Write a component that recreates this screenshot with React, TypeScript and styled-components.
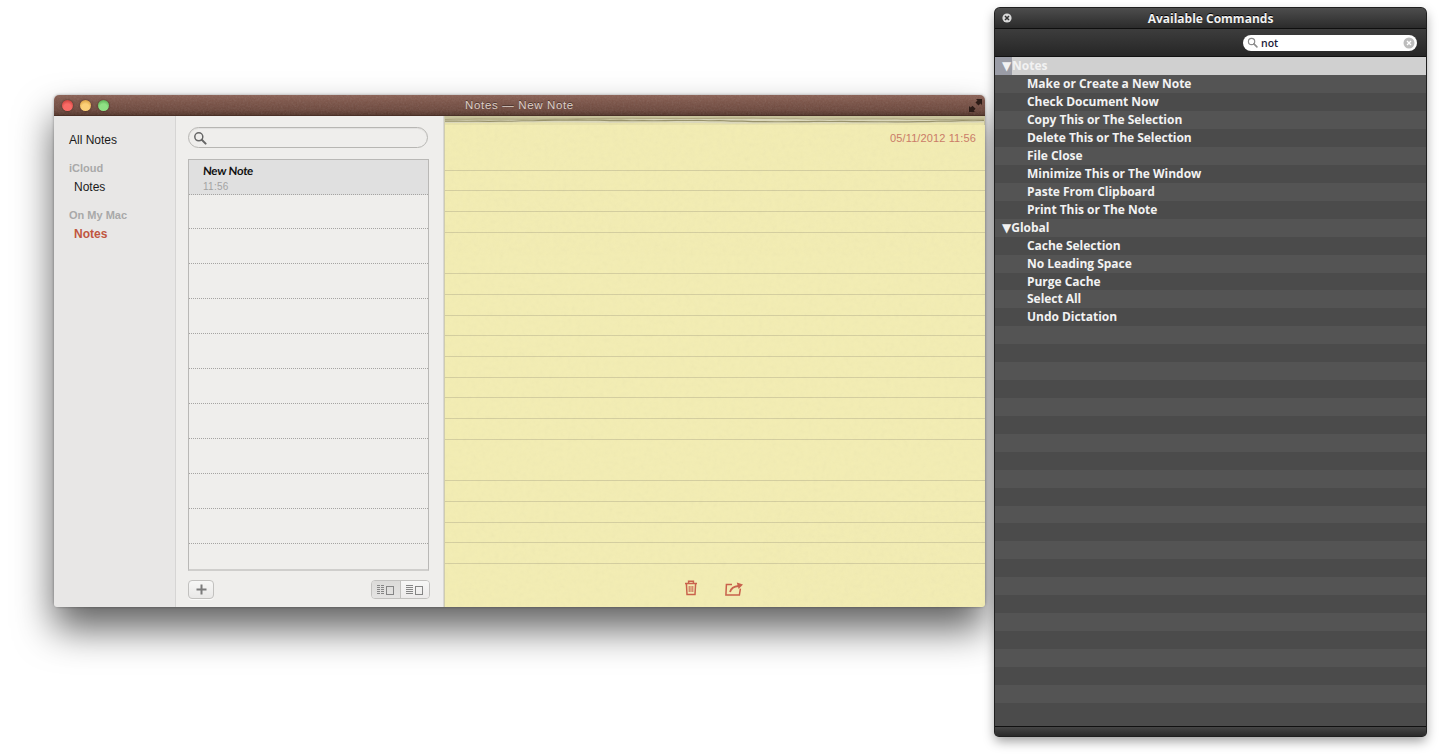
import styled, { createGlobalStyle } from 'styled-components'

const GlobalStyle = createGlobalStyle`
  html, body {
    margin: 0;
    height: 100%;
    background: #fff;
    overflow: hidden;
  }
`

const Desktop = styled.div`
  position: relative;
  width: 1440px;
  height: 756px;
  overflow: hidden;
  font-family: 'Liberation Sans', Arial, sans-serif;
`

/* notes window */
const NotesWindow = styled.div`
  position: absolute;
  left: 54px;
  top: 95px;
  width: 931px;
  height: 512px;
  display: flex;
  flex-direction: column;
  border-radius: 5px 5px 3px 3px;
  overflow: hidden;
`
const WindowShadow = styled.div`
  position: absolute;
  left: 54px;
  top: 95px;
  width: 931px;
  height: 512px;
  border-radius: 5px;
  box-shadow: 0 22px 38px rgba(0, 0, 0, 0.62), 0 0 3px rgba(0, 0, 0, 0.35);
`
const Grain = styled.svg<{ $opacity: number }>`
  position: absolute;
  inset: 0;
  width: 100%;
  height: 100%;
  opacity: ${(p) => p.$opacity};
  pointer-events: none;
`
const TitleBar = styled.div`
  position: relative;
  flex: none;
  height: 21px;
  display: flex;
  align-items: center;
  justify-content: center;
  background: linear-gradient(#8a6054 0%, #7a5246 35%, #6c473c 75%, #523429 100%);
  border-bottom: 1px solid #4a3027;
  box-sizing: border-box;
`
const TrafficLights = styled.div`
  position: absolute;
  left: 8px;
  top: 5px;
  display: flex;
  gap: 7px;
`
const Light = styled.span<{ $c: string; $d: string }>`
  width: 11px;
  height: 11px;
  border-radius: 50%;
  background: radial-gradient(circle at 50% 70%, ${(p) => p.$c} 0%, ${(p) => p.$c} 40%, ${(p) => p.$d} 100%);
  box-shadow: 0 0 2px rgba(40, 20, 10, 0.7);
`
const WindowTitle = styled.div`
  position: relative;
  font-size: 11.5px;
  letter-spacing: 0.65px;
  color: #dbcdc6;
  text-shadow: 0 -1px 0 rgba(0, 0, 0, 0.4);
`
const ExpandIcon = styled.svg`
  position: absolute;
  right: 2px;
  top: 3px;
`
const WindowBody = styled.div`
  flex: 1;
  min-height: 0;
  display: flex;
`
const Sidebar = styled.nav`
  flex: none;
  width: 122px;
  box-sizing: border-box;
  padding: 15px 0 0 15px;
  background: #e8e7e6;
  border-right: 1px solid #d6d5d4;
  font-size: 12px;
`
const SideItem = styled.div<{ $indent?: boolean; $active?: boolean }>`
  height: 19px;
  line-height: 19px;
  margin-left: ${(p) => (p.$indent ? '5px' : '0')};
  color: ${(p) => (p.$active ? '#c0563f' : '#1a1a1a')};
  font-weight: ${(p) => (p.$active ? 700 : 400)};
`
const SideGroup = styled.div`
  height: 19px;
  line-height: 19px;
  margin-top: 9px;
  color: #a9a9a9;
  font-weight: 700;
  font-size: 11px;
`
const ListPane = styled.section`
  flex: none;
  width: 268px;
  box-sizing: border-box;
  display: flex;
  flex-direction: column;
  padding: 11px 14px 8px 12px;
  background: #efeeec;
  border-right: 1px solid #d8d7d5;
`
const SearchBox = styled.div`
  flex: none;
  width: 240px;
  height: 21px;
  box-sizing: border-box;
  display: flex;
  align-items: center;
  padding-left: 4px;
  border: 1px solid #b7b6b3;
  border-radius: 11px;
  background: #efeeec;
  box-shadow: inset 0 1px 1px rgba(0, 0, 0, 0.06);
`
const NoteList = styled.div`
  flex: 1;
  min-height: 0;
  margin-top: 11px;
  display: flex;
  flex-direction: column;
  border: 1px solid #b9b8b6;
  border-bottom: 2px solid #cfcecc;
  width: 241px;
  box-sizing: border-box;
`
const NoteRow = styled.div<{ $selected?: boolean; $last?: boolean }>`
  flex: ${(p) => (p.$last ? '1' : 'none')};
  height: ${(p) => (p.$selected ? '34.6px' : '34.9px')};
  box-sizing: border-box;
  padding: 3px 0 0 14px;
  background: ${(p) => (p.$selected ? '#e0e0e0' : 'transparent')};
  border-bottom: ${(p) => (p.$last ? 'none' : '1px dotted #a5a4a2')};
`
const NoteName = styled.div`
  font-family: 'Lato', 'Liberation Sans', sans-serif;
  font-weight: 700;
  font-size: 11.5px;
  line-height: 15px;
  letter-spacing: -0.25px;
  color: #111;
  transform: skewX(-4deg);
  transform-origin: left;
`
const NoteTime = styled.div`
  margin-top: 3px;
  font-size: 10px;
  line-height: 12px;
  letter-spacing: 0.25px;
  color: #a3a3a3;
`
const ListFooter = styled.div`
  flex: none;
  height: 19px;
  margin-top: 9px;
  width: 242px;
  display: flex;
  justify-content: space-between;
`
const FooterButton = styled.button`
  width: 26px;
  height: 19px;
  padding: 0;
  display: flex;
  align-items: center;
  justify-content: center;
  border: 1px solid #c2c1bf;
  border-radius: 4px;
  background: linear-gradient(#f7f7f6, #e9e8e7);
  box-shadow: 0 1px 0 rgba(255, 255, 255, 0.7);
`
const Segmented = styled.div`
  display: flex;
  height: 19px;
  box-sizing: border-box;
  border: 1px solid #c2c1bf;
  border-radius: 4px;
  overflow: hidden;
`
const Segment = styled.div<{ $on?: boolean }>`
  width: 28px;
  display: flex;
  align-items: center;
  justify-content: center;
  background: ${(p) => (p.$on ? 'linear-gradient(#dcdbd9, #e4e3e2)' : 'linear-gradient(#f7f7f6, #eceaea)')};
  & + & {
    border-left: 1px solid #c2c1bf;
  }
`
const Paper = styled.main`
  position: relative;
  flex: 1;
  min-width: 0;
  display: flex;
  flex-direction: column;
  background: #f3edb3;
  border-left: 1px solid #cfccae;
`
const TornEdge = styled.svg`
  flex: none;
  display: block;
  width: 100%;
  height: 9px;
`
const DateRow = styled.div`
  flex: none;
  height: 25px;
  box-sizing: border-box;
  padding: 7px 9px 0 0;
  text-align: right;
  font-size: 11px;
  line-height: 13px;
  letter-spacing: 0.12px;
  color: #cb7a66;
`
const Ruled = styled.div`
  flex: 1;
  min-height: 0;
  background: repeating-linear-gradient(
    to bottom,
    transparent 0,
    transparent 19.7px,
    #d4ce9f 19.7px,
    #d4ce9f 20.7px
  );
`
const PaperFooter = styled.div`
  flex: none;
  height: 37px;
  box-sizing: border-box;
  display: flex;
  align-items: center;
  justify-content: center;
  gap: 27px;
  padding: 0 2px 1px 0;
`

/* commands panel */
const Panel = styled.aside`
  position: absolute;
  left: 995px;
  top: 8px;
  width: 431px;
  height: 728px;
  display: flex;
  flex-direction: column;
  border-radius: 5px 5px 4px 4px;
  overflow: hidden;
  background: #4b4b4b;
  box-shadow: 0 0 0 1px #1f1f1f, 0 5px 12px rgba(0, 0, 0, 0.4);
  font-family: 'Open Sans', 'Liberation Sans', sans-serif;
`
const PanelTitle = styled.div`
  position: relative;
  flex: none;
  height: 21px;
  box-sizing: border-box;
  display: flex;
  align-items: center;
  justify-content: center;
  background: linear-gradient(#4d4d4d, #2b2b2b);
  border-bottom: 1px solid #0f0f0f;
  color: #f1f1f1;
  font-weight: 700;
  font-size: 12px;
  text-shadow: 0 -1px 0 #000;
`
const PanelClose = styled.svg`
  position: absolute;
  left: 7px;
  top: 5px;
`
const PanelToolbar = styled.div`
  flex: none;
  height: 28px;
  box-sizing: border-box;
  display: flex;
  align-items: center;
  justify-content: flex-end;
  padding-right: 9px;
  background: linear-gradient(#3d3d3d, #262626);
  border-bottom: 1px solid #111;
`
const CommandSearch = styled.div`
  width: 174px;
  height: 16px;
  box-sizing: border-box;
  display: flex;
  align-items: center;
  padding: 0 2px 0 4px;
  background: #fff;
  border-radius: 8px;
  font-size: 10.5px;
  font-weight: 600;
  color: #1c1c3a;
`
const SearchText = styled.span`
  flex: 1;
  margin-left: 3px;
`
const Rows = styled.div`
  flex: 1;
  min-height: 0;
  overflow: hidden;
`
const CommandRow = styled.div<{ $odd: boolean; $indent?: boolean }>`
  height: 17.93px;
  line-height: 17.93px;
  box-sizing: border-box;
  padding-left: ${(p) => (p.$indent ? '32px' : '7px')};
  background: ${(p) => (p.$odd ? '#545454' : '#4b4b4b')};
  color: #f2f2f2;
  font-weight: 700;
  font-size: 12px;
  letter-spacing: -0.03px;
  white-space: nowrap;
`
const SelectedHeader = styled.div`
  height: 18.4px;
  display: flex;
  background: #d0d0d0;
  color: #f2f2f2;
  font-weight: 700;
  font-size: 12px;
  line-height: 18px;
`
const SelectedArrow = styled.span`
  flex: none;
  width: 17px;
  box-sizing: border-box;
  padding-left: 7px;
  background: #9a9ca6;
`
const Arrow = styled.span`
  font-family: 'DejaVu Sans', sans-serif;
  font-size: 12px;
  letter-spacing: 0;
`
const PanelBottom = styled.div`
  flex: none;
  height: 10px;
  background: linear-gradient(#464646, #2a2a2a);
  border-top: 1px solid #111;
  box-sizing: border-box;
`

const Magnifier = ({ color, size }: { color: string; size: number }) => (
  <svg width={size} height={size} viewBox="0 0 14 14" fill="none" stroke={color}>
    <circle cx="5.8" cy="5.8" r="4" strokeWidth="1.5" />
    <path d="M8.8 8.8 L12.6 12.6" strokeWidth="2" strokeLinecap="round" />
  </svg>
)

const ColumnsIcon = ({ fine }: { fine?: boolean }) => (
  <svg width="20" height="10" viewBox="0 0 20 10" fill="none" stroke="#858585" strokeWidth="1">
    {[0.5, 2.5, 4.5, 6.5, 8.5].map((y) => (
      <path key={y} d={fine ? `M1 ${y} H4 M5 ${y} H8` : `M1 ${y} H8`} />
    ))}
    <rect x="10.5" y="1.5" width="7" height="8" />
  </svg>
)

// paper texture and leather grain, same filter at two strengths
const GrainLayer = ({ id, freq, opacity }: { id: string; freq: string; opacity: number }) => (
  <Grain $opacity={opacity}>
    <filter id={id}>
      <feTurbulence type="fractalNoise" baseFrequency={freq} numOctaves="3" seed="4" />
      <feColorMatrix type="saturate" values="0" />
    </filter>
    <rect width="100%" height="100%" filter={`url(#${id})`} />
  </Grain>
)

// ragged line across the top of the pad
const rip = (base: number, amp: number, phase: number) => {
  const pts = []
  for (let x = 0; x <= 540; x += 11) {
    const y =
      base +
      amp * (Math.sin(x * 0.013 + phase) + 0.5 * Math.sin(x * 0.047 + phase * 2) + 0.25 * Math.sin(x * 0.83 + phase))
    pts.push(`${x} ${y.toFixed(1)}`)
  }
  return `M${pts.join(' L')}`
}

const notesCommands = [
  'Make or Create a New Note',
  'Check Document Now',
  'Copy This or The Selection',
  'Delete This or The Selection',
  'File Close',
  'Minimize This or The Window',
  'Paste From Clipboard',
  'Print This or The Note',
]
const globalCommands = [
  'Cache Selection',
  'No Leading Space',
  'Purge Cache',
  'Select All',
  'Undo Dictation',
]

const App = () => {
  const rows = [
    ...notesCommands.map((t) => ({ text: t, indent: true })),
    { text: 'Global', indent: false },
    ...globalCommands.map((t) => ({ text: t, indent: true })),
    ...Array.from({ length: 22 }, () => ({ text: '', indent: true })),
  ]

  return (
    <Desktop>
      <GlobalStyle />
      <WindowShadow />
      <NotesWindow>
        <TitleBar>
          <GrainLayer id="leather" freq="0.55" opacity={0.14} />
          <TrafficLights>
            <Light $c="#f96b66" $d="#bb2d2a" />
            <Light $c="#fbd078" $d="#cf8f2a" />
            <Light $c="#8fe084" $d="#46993f" />
          </TrafficLights>
          <WindowTitle>Notes — New Note</WindowTitle>
          <ExpandIcon width="15" height="15" viewBox="0 0 15 15" fill="#2c1c17">
            <path d="M8 1 H14 V7 L12.5 5.5 L10.5 7.5 L7.5 4.5 L9.5 2.5 Z" />
            <path d="M1 14 V8 L2.6 9.6 L4.5 7.7 L7.6 10.8 L5.7 12.7 L7 14 Z" />
          </ExpandIcon>
        </TitleBar>
        <WindowBody>
          <Sidebar>
            <SideItem>All Notes</SideItem>
            <SideGroup>iCloud</SideGroup>
            <SideItem $indent>Notes</SideItem>
            <SideGroup>On My Mac</SideGroup>
            <SideItem $indent $active>
              Notes
            </SideItem>
          </Sidebar>
          <ListPane>
            <SearchBox>
              <Magnifier color="#666" size={14} />
            </SearchBox>
            <NoteList>
              <NoteRow $selected>
                <NoteName>New Note</NoteName>
                <NoteTime>11:56</NoteTime>
              </NoteRow>
              {Array.from({ length: 10 }, (_, i) => (
                <NoteRow key={i} />
              ))}
              <NoteRow $last />
            </NoteList>
            <ListFooter>
              <FooterButton>
                <svg width="11" height="11" viewBox="0 0 11 11" stroke="#7b7b7b" strokeWidth="2">
                  <path d="M5.5 0.5 V10.5 M0.5 5.5 H10.5" />
                </svg>
              </FooterButton>
              <Segmented>
                <Segment $on>
                  <ColumnsIcon fine />
                </Segment>
                <Segment>
                  <ColumnsIcon />
                </Segment>
              </Segmented>
            </ListFooter>
          </ListPane>
          <Paper>
            <GrainLayer id="pad" freq="0.22" opacity={0.05} />
            <TornEdge viewBox="0 0 540 9" preserveAspectRatio="none">
              <rect width="540" height="9" fill="#c9c49c" />
              <path d={`${rip(3.4, 0.6, 0.4)} V9 H0 Z`} fill="#dcd8bb" />
              <path d={rip(2.8, 0.5, 1.5)} fill="none" stroke="#aaa47c" strokeWidth="0.9" />
              <path d={rip(5, 0.7, 2.6)} fill="none" stroke="#98926a" strokeWidth="1.1" />
              <path d={`${rip(7, 0.5, 3.3)} V9 H0 Z`} fill="#e9e3aa" />
            </TornEdge>
            <DateRow>05/11/2012 11:56</DateRow>
            <Ruled />
            <PaperFooter>
              <svg width="14" height="16" viewBox="0 0 14 16" fill="none" stroke="#c9604a" strokeWidth="1.5">
                <path d="M1 3.4 H13 M4.6 3 V1.2 H9.4 V3 M2.4 3.6 L3 14.6 H11 L11.6 3.6" />
                <path d="M5.2 6 V12 M7 6 V12 M8.8 6 V12" strokeWidth="1" />
              </svg>
              <svg width="19" height="15" viewBox="0 0 19 15" fill="none" stroke="#c9604a" strokeWidth="1.5">
                <path d="M7 3.6 H1.4 L0.9 14 H14.4 L15.4 7.6" />
                <path d="M5 11 C6 7.4 9 5.4 13.4 5" strokeWidth="1.8" />
                <path d="M11.8 1.4 L18 3.4 L13.6 8 Z" fill="#c9604a" stroke="none" />
              </svg>
            </PaperFooter>
          </Paper>
        </WindowBody>
      </NotesWindow>

      <Panel>
        <PanelTitle>
          <PanelClose width="10" height="10" viewBox="0 0 10 10">
            <circle cx="5" cy="5" r="4.6" fill="#d8d8d8" />
            <path d="M3 3 L7 7 M7 3 L3 7" stroke="#333" strokeWidth="1.5" />
          </PanelClose>
          Available Commands
        </PanelTitle>
        <PanelToolbar>
          <CommandSearch>
            <Magnifier color="#8c8c8c" size={11} />
            <SearchText>not</SearchText>
            <svg width="12" height="12" viewBox="0 0 12 12">
              <circle cx="6" cy="6" r="5.5" fill="#bdbdbd" />
              <path d="M4 4 L8 8 M8 4 L4 8" stroke="#fff" strokeWidth="1.3" />
            </svg>
          </CommandSearch>
        </PanelToolbar>
        <Rows>
          <SelectedHeader>
            <SelectedArrow>
              <Arrow>▼</Arrow>
            </SelectedArrow>
            Notes
          </SelectedHeader>
          {rows.map((row, i) => (
            <CommandRow key={i} $odd={i % 2 === 0} $indent={row.indent}>
              {!row.indent && <Arrow>▼</Arrow>}
              {row.text}
            </CommandRow>
          ))}
        </Rows>
        <PanelBottom />
      </Panel>
    </Desktop>
  )
}

export default App
